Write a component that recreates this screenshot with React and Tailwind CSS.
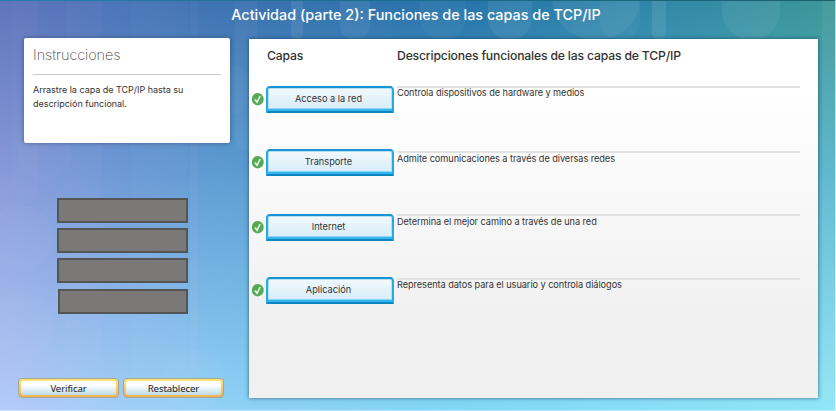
const layers = [
  {
    name: 'Acceso a la red',
    text: 'Controla dispositivos de hardware y medios',
    row: 'h-[65px]',
    chip: 'mt-0',
    label: '-mt-[2px]',
  },
  {
    name: 'Transporte',
    text: 'Admite comunicaciones a través de diversas redes',
    row: 'h-[63px]',
    chip: '-mt-[2px]',
    label: '-mt-px',
  },
  {
    name: 'Internet',
    text: 'Determina el mejor camino a través de una red',
    row: 'h-[64px]',
    chip: 'mt-0',
    label: '-mt-px',
  },
  {
    name: 'Aplicación',
    text: 'Representa datos para el usuario y controla diálogos',
    row: 'h-[64px]',
    chip: '-mt-px',
    label: '-mt-[2px]',
  },
];

const streaks = [
  [12, 26, 200, 0.02],
  [66, 36, 411, 0.02],
  [131, 56, 411, 0.02],
  [190, 7, 370, 0.03],
  [235, 22, 150, 0.04],
  [291, 12, 40, 0.08],
  [340, 30, 40, 0.06],
  [420, 46, 40, 0.04],
  [488, 44, 40, 0.07],
  [552, 88, 40, 0.06],
  [600, 40, 40, 0.04],
  [652, 14, 40, 0.09],
  [722, 58, 40, 0.06],
  [822, 14, 400, 0.05],
];

function Backdrop() {
  return (
    <svg className="absolute inset-0 -z-10" width="836" height="411" viewBox="0 0 836 411">
      <defs>
        <linearGradient id="top">
          <stop offset="0" stopColor="#6174bd" />
          <stop offset=".15" stopColor="#4a75b8" />
          <stop offset=".3" stopColor="#3b72b0" />
          <stop offset=".56" stopColor="#2674aa" />
          <stop offset=".8" stopColor="#3189a8" />
          <stop offset="1" stopColor="#3d9797" />
        </linearGradient>
        <linearGradient id="mid">
          <stop offset="0" stopColor="#8b9bda" />
          <stop offset=".15" stopColor="#6e9ad6" />
          <stop offset=".3" stopColor="#5b9ed2" />
          <stop offset="1" stopColor="#5ab7cd" />
        </linearGradient>
        <linearGradient id="low">
          <stop offset="0" stopColor="#b5cbf9" />
          <stop offset=".28" stopColor="#8fd2f7" />
          <stop offset=".56" stopColor="#83d8f7" />
          <stop offset="1" stopColor="#92e7f8" />
        </linearGradient>
        <linearGradient id="fadeMid" x2="0" y2="1">
          <stop offset="0" stopColor="#fff" stopOpacity="0" />
          <stop offset=".44" stopColor="#fff" stopOpacity="1" />
        </linearGradient>
        <linearGradient id="fadeLow" x2="0" y2="1">
          <stop offset=".42" stopColor="#fff" stopOpacity="0" />
          <stop offset="1" stopColor="#fff" stopOpacity="1" />
        </linearGradient>
        <linearGradient id="edge">
          <stop offset="0" stopColor="#2181ad" />
          <stop offset=".35" stopColor="#1c7096" />
          <stop offset="1" stopColor="#17606f" />
        </linearGradient>
        <mask id="maskMid">
          <rect width="836" height="411" fill="url(#fadeMid)" />
        </mask>
        <mask id="maskLow">
          <rect width="836" height="411" fill="url(#fadeLow)" />
        </mask>
      </defs>
      <rect width="836" height="411" fill="url(#top)" />
      <rect width="836" height="411" fill="url(#mid)" mask="url(#maskMid)" />
      <rect width="836" height="411" fill="url(#low)" mask="url(#maskLow)" />
      {streaks.map(([x, w, h, o]) => (
        <rect key={x} x={x} y="-40" width={w} height={h + 40} rx={w / 2} fill="#fff" opacity={o} />
      ))}
      <g fill="#fff" opacity=".025">
        <circle cx="20" cy="238" r="33" />
        <circle cx="22" cy="325" r="31" />
        <circle cx="44" cy="155" r="26" />
        <circle cx="194" cy="381" r="31" />
        <circle cx="226" cy="90" r="26" />
      </g>
      <rect width="836" height="1" fill="url(#edge)" />
      <rect y="410" width="836" height="1" fill="#fff" opacity=".4" />
      <rect x="835" width="1" height="411" fill="#fff" opacity=".6" />
    </svg>
  );
}

function Check() {
  return (
    <svg className="mt-[7px] shrink-0" width="12" height="13" viewBox="0 0 12 13">
      <ellipse cx="5.8" cy="6.2" rx="5.9" ry="6.2" fill="#58a957" />
      <path d="M3 6.6 L5 9.3 L8.2 3" fill="none" stroke="#e9f6e9" strokeWidth="1.6" />
    </svg>
  );
}

function Chip({ children }) {
  return (
    <div className="flex h-[27px] w-[128px] shrink-0 items-center justify-center rounded-t-[4px] rounded-b-[1px] border-2 border-b-[2px] border-[#27a9e6] border-t-[#1894d2] border-b-[#0c86bf] bg-linear-to-b from-[#f2f9fe] to-[#d5ebf7] pr-[3px] pb-px text-[9.2px] text-[#333] shadow-[inset_0_-2px_0_#35b6ee,inset_0_-3px_0_#8fd6f5,inset_0_1px_0_#b5e0f6,inset_1px_0_0_#b5e0f6,inset_-1px_0_0_#b5e0f6]">
      {children}
    </div>
  );
}

function ActionButton({ children }) {
  return (
    <button className="flex h-5 w-[101px] items-center justify-center rounded-[4px] border border-[#a5a699] bg-linear-to-b from-[#ffe873] to-[#f2b14f] p-[2px]">
      <span className="flex h-full w-full items-center justify-center rounded-[2px] bg-linear-to-b from-white from-30% to-[#bcdbe8] pt-[3px] font-['Noto_Sans','Open_Sans',sans-serif] text-[9.6px] tracking-[-0.1px] text-[#222]">
        {children}
      </span>
    </button>
  );
}

export default function App() {
  return (
    <div className="relative isolate h-[411px] w-[836px] overflow-hidden font-['Inter',sans-serif] text-[#333]">
      <Backdrop />
      <h1 className="flex h-[38px] items-start justify-center pt-[5px] pr-[4px] text-[14.4px] leading-5 font-medium whitespace-nowrap text-white">
        Actividad (parte 2): Funciones de las capas de TCP/IP
      </h1>
      <div className="flex items-start pl-6">
        <aside className="flex h-[373px] w-[206px] shrink-0 flex-col">
          <section className="h-[105px] rounded-[2px] bg-white px-[9px] pt-[7px] shadow-[0_0_4px_rgba(40,50,80,.55)]">
            <h2 className="h-[29px] text-[14.4px] leading-[19px] font-extralight tracking-[-0.04px] text-[#444]">
              Instrucciones
            </h2>
            <hr className="w-[188px] border-[#c9c9c9]" />
            <p className="pt-[8px] text-[9px] leading-[14px] tracking-[-0.02px] whitespace-nowrap">
              Arrastre la capa de TCP/IP hasta su
              <br />
              descripción funcional.
            </p>
          </section>
          <div className="mt-[55px] flex flex-col gap-[5px] pl-[33px]">
            <div className="h-[25px] w-[131px] border-2 border-[#555] bg-[#7b7878]" />
            <div className="h-[25px] w-[131px] border-2 border-[#555] bg-[#7b7878]" />
            <div className="h-[25px] w-[131px] border-2 border-[#555] bg-[#7b7878]" />
            <div className="mt-px ml-px h-[25px] w-[130px] border-2 border-[#555] bg-[#7b7878]" />
          </div>
          <div className="mt-[64px] -ml-[6px] flex gap-1">
            <ActionButton>Verificar</ActionButton>
            <ActionButton>Restablecer</ActionButton>
          </div>
        </aside>
        <main className="mt-px ml-[19px] h-[359px] w-[569px] shrink-0 bg-linear-to-b from-white from-15% to-[#f0f0f0] to-80% pl-[3px] shadow-[0_0_4px_rgba(20,50,80,.7)]">
          <div className="flex h-[47px] pt-2 pl-[15px] text-[12.2px] leading-[18px] font-medium tracking-[-0.17px]">
            <h3 className="w-[130px]">Capas</h3>
            <h3 className="whitespace-nowrap">Descripciones funcionales de las capas de TCP/IP</h3>
          </div>
          {layers.map((l) => (
            <div key={l.name} className={`flex items-start ${l.row}`}>
              <div className={`flex gap-[2px] ${l.chip}`}>
                <Check />
                <Chip>{l.name}</Chip>
              </div>
              <div className="ml-[3px] w-[403px] border-t-2 border-[#e2e2e2]">
                <p className={`text-[9.2px] leading-[13px] tracking-[-0.06px] whitespace-nowrap ${l.label}`}>
                  {l.text}
                </p>
              </div>
            </div>
          ))}
        </main>
      </div>
    </div>
  );
}
